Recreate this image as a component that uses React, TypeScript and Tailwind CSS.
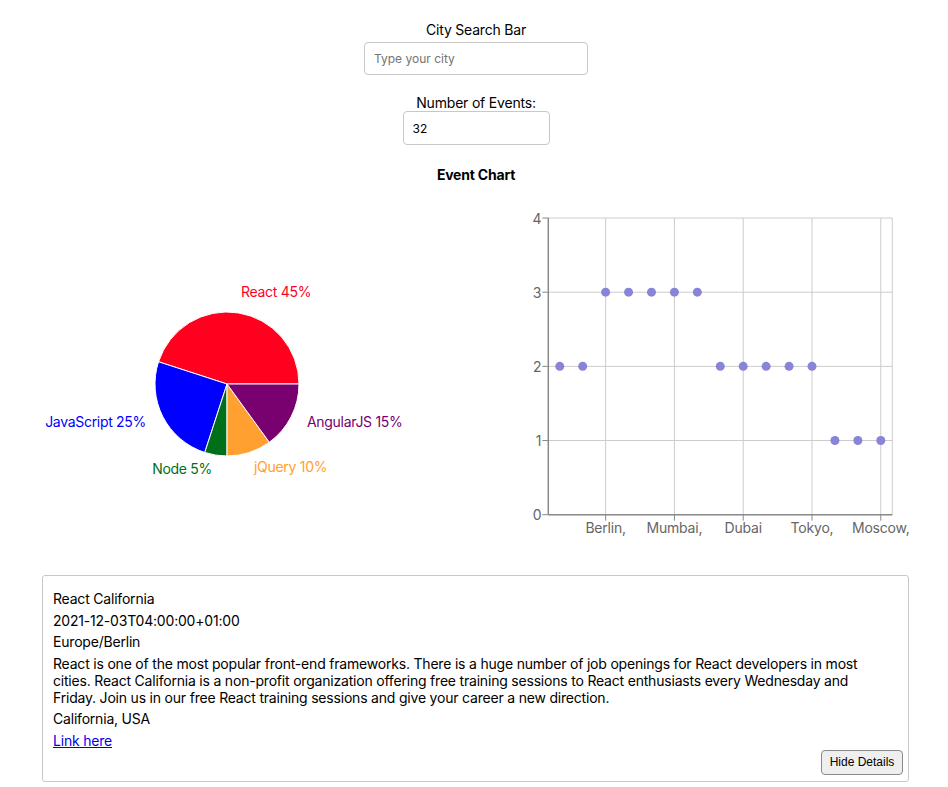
import React from "react";

const slices = [
  { d: "M185,190 L257,190 A72,72 0 0 0 116.524,167.751 Z", fill: "#ff001e" },
  { d: "M185,190 L116.524,167.751 A72,72 0 0 0 162.751,258.476 Z", fill: "#0000ff" },
  { d: "M185,190 L162.751,258.476 A72,72 0 0 0 185,262 Z", fill: "#006f1a" },
  { d: "M185,190 L185,262 A72,72 0 0 0 227.321,248.249 Z", fill: "#ffa031" },
  { d: "M185,190 L227.321,248.249 A72,72 0 0 0 257,190 Z", fill: "#78006f" },
];

const labels = [
  { t: "React 45%", x: 199, y: 97, a: "start", c: "#ff001e" },
  { t: "JavaScript 25%", x: 104, y: 227, a: "end", c: "#0000ff" },
  { t: "Node 5%", x: 170, y: 274, a: "end", c: "#006f1a" },
  { t: "jQuery 10%", x: 212, y: 272, a: "start", c: "#ffa031" },
  { t: "AngularJS 15%", x: 265, y: 227, a: "start", c: "#78006f" },
];

const values = [2, 2, 3, 3, 3, 3, 3, 2, 2, 2, 2, 2, 1, 1, 1];
const band = 22.93;
const x0 = 73.3;
const yFor = (v: number) => 320.7 - v * 74.17;
const xFor = (i: number) => x0 + band * (i + 0.5);
const xTicks = [
  { i: 2, t: "Berlin," },
  { i: 5, t: "Mumbai," },
  { i: 8, t: "Dubai" },
  { i: 11, t: "Tokyo," },
  { i: 14, t: "Moscow," },
];

function PieChart() {
  return (
    <svg width={433} height={350} className="block">
      {slices.map((s, i) => (
        <path key={i} d={s.d} fill={s.fill} stroke="#fff" strokeWidth={1} />
      ))}
      {labels.map((l, i) => (
        <text
          key={i}
          x={l.x}
          y={l.y}
          textAnchor={l.a as "start" | "end"}
          dominantBaseline="central"
          fill={l.c}
          fontSize={14}
          letterSpacing={-0.3}
        >
          {l.t}
        </text>
      ))}
    </svg>
  );
}

function ScatterChart() {
  const right = x0 + band * 15;
  return (
    <svg width={434} height={350} className="block">
      {[0, 1, 2, 3, 4].map((v) => (
        <line key={v} x1={x0} x2={right} y1={yFor(v)} y2={yFor(v)} stroke="#ccc" strokeWidth={1} />
      ))}
      {xTicks.map((t) => (
        <line key={t.i} x1={xFor(t.i)} x2={xFor(t.i)} y1={yFor(4)} y2={yFor(0)} stroke="#ccc" strokeWidth={1} />
      ))}
      <line x1={right} x2={right} y1={yFor(4)} y2={yFor(0)} stroke="#ccc" strokeWidth={1} />
      <line x1={x0} x2={x0} y1={yFor(4)} y2={yFor(0)} stroke="#8a8a8a" strokeWidth={1.5} />
      <line x1={x0} x2={right} y1={yFor(0)} y2={yFor(0)} stroke="#8a8a8a" strokeWidth={1.5} />
      {[0, 1, 2, 3, 4].map((v) => (
        <g key={v}>
          <line x1={x0 - 6} x2={x0} y1={yFor(v)} y2={yFor(v)} stroke="#8a8a8a" strokeWidth={1} />
          <text x={x0 - 7} y={yFor(v)} textAnchor="end" dominantBaseline="central" fill="#666" fontSize={14}>
            {v}
          </text>
        </g>
      ))}
      {xTicks.map((t) => (
        <g key={t.i}>
          <line x1={xFor(t.i)} x2={xFor(t.i)} y1={yFor(0)} y2={yFor(0) + 6} stroke="#8a8a8a" strokeWidth={1} />
          <text
            x={xFor(t.i)}
            y={333}
            textAnchor="middle"
            dominantBaseline="central"
            fill="#666"
            fontSize={14}
            letterSpacing={-0.2}
          >
            {t.t}
          </text>
        </g>
      ))}
      {values.map((v, i) => (
        <circle key={i} cx={xFor(i)} cy={yFor(v)} r={4.5} fill="#8884d8" />
      ))}
    </svg>
  );
}

export default function App() {
  return (
    <div
      className="min-h-[787px] bg-white text-black text-[14px] leading-[17px] tracking-[-0.2px]"
      style={{ fontFamily: 'Inter, "Liberation Sans", Arial, sans-serif' }}
    >
      <div className="flex flex-col items-center pt-[21px] pl-[4px]">
        <label className="block">City Search Bar</label>
        <input
          type="text"
          placeholder="Type your city"
          className="mt-[4px] w-[224px] h-[33px] rounded-[4px] border border-[#c8c8c8] px-[9px] text-[12px] tracking-normal placeholder:text-[#757575] outline-none"
        />
        <label className="block mt-[19px]">Number of Events:</label>
        <input
          type="number"
          defaultValue={32}
          className="w-[147px] h-[34px] rounded-[4px] border border-[#c8c8c8] px-[9px] text-[12px] tracking-normal outline-none"
        />
        <h3 className="mt-[21px] font-bold">Event Chart</h3>
      </div>
      <div className="ml-[42px] w-[867px] mt-[11px] flex">
        <PieChart />
        <ScatterChart />
      </div>
      <div className="ml-[42px] w-[867px] mt-[31px] border border-[#c8c8c8] rounded-[3px] pt-[14px] pl-[10px] pr-[5px] pb-[6px]">
        <div className="flex flex-col gap-[4.5px] pr-[10px]">
          <div>React California</div>
          <div>2021-12-03T04:00:00+01:00</div>
          <div>Europe/Berlin</div>
          <p>
            React is one of the most popular front-end frameworks. There is a huge number of job openings for React
            developers in most cities. React California is a non-profit organization offering free training sessions to
            React enthusiasts every Wednesday and Friday. Join us in our free React training sessions and give your career a
            new direction.
          </p>
          <div>California, USA</div>
          <div>
            <a href="#" className="text-[#0000ee] underline">
              Link here
            </a>
          </div>
        </div>
        <div className="flex justify-end mt-[1px]">
          <button
            className="w-[82px] h-[25px] rounded-[4px] border border-[#8a8a8a] bg-[#efefef] text-[12px] tracking-normal text-black"
            style={{ fontFamily: '"Liberation Sans", Arial, sans-serif' }}
          >
            Hide Details
          </button>
        </div>
      </div>
    </div>
  );
}
